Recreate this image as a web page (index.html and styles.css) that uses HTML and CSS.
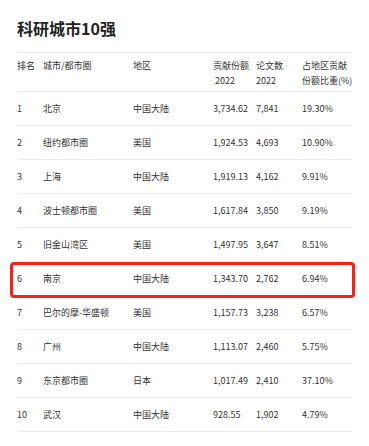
FILE: index.html
```html
<!DOCTYPE html>
<html lang="zh">
<head>
<meta charset="utf-8">
<link rel="stylesheet" href="styles.css">
</head>
<body>
<h1 class="title">科研城市10强</h1>
<div class="table-wrap">
<table class="rank">
<colgroup>
<col class="c1"><col class="c2"><col class="c3"><col class="c4"><col class="c5"><col class="c6">
</colgroup>
<thead>
<tr><th>排名</th><th>城市/都市圈</th><th>地区</th><th>贡献份额<br><span class="yr">2022</span></th><th>论文数<br>2022</th><th>占地区贡献<br>份额比重(%)</th></tr>
</thead>
<tbody>
<tr><td>1</td><td>北京</td><td>中国大陆</td><td>3,734.62</td><td>7,841</td><td>19.30%</td></tr>
<tr><td>2</td><td>纽约都市圈</td><td>美国</td><td>1,924.53</td><td>4,693</td><td>10.90%</td></tr>
<tr><td>3</td><td>上海</td><td>中国大陆</td><td>1,919.13</td><td>4,162</td><td>9.91%</td></tr>
<tr><td>4</td><td>波士顿都市圈</td><td>美国</td><td>1,617.84</td><td>3,850</td><td>9.19%</td></tr>
<tr><td>5</td><td>旧金山湾区</td><td>美国</td><td>1,497.95</td><td>3,647</td><td>8.51%</td></tr>
<tr><td>6</td><td>南京</td><td>中国大陆</td><td>1,343.70</td><td>2,762</td><td>6.94%</td></tr>
<tr><td>7</td><td>巴尔的摩-华盛顿</td><td>美国</td><td>1,157.73</td><td>3,238</td><td>6.57%</td></tr>
<tr><td>8</td><td>广州</td><td>中国大陆</td><td>1,113.07</td><td>2,460</td><td>5.75%</td></tr>
<tr><td>9</td><td>东京都市圈</td><td>日本</td><td>1,017.49</td><td>2,410</td><td>37.10%</td></tr>
<tr><td>10</td><td>武汉</td><td>中国大陆</td><td>928.55</td><td>1,902</td><td>4.79%</td></tr>
</tbody>
</table>
<div class="highlight"></div>
</div>
</body>
</html>
```
FILE: styles.css
```css
html, body {
  margin: 0;
  padding: 0;
  background: #fff;
}
body {
  padding: 0 17px;
  font-family: "Noto Sans CJK SC", "Noto Sans", sans-serif;
  color: #333;
}
.title {
  margin: 16px 0 12px;
  font-size: 16px;
  line-height: 24px;
  font-weight: 700;
  color: #222;
}
.table-wrap {
  position: relative;
  width: 335px;
}
.rank {
  width: 335px;
  table-layout: fixed;
  border-collapse: collapse;
  font-size: 9px;
  line-height: 15px;
}
.c1 { width: 26px; }
.c2 { width: 90px; }
.c3 { width: 80px; }
.c4 { width: 43px; }
.c5 { width: 46px; }
.c6 { width: 50px; }
.rank th {
  font-weight: 400;
  text-align: left;
  vertical-align: top;
  padding: 5px 0 3px;
  height: 30px;
  border-top: 1px solid #ececec;
  border-bottom: 1px solid #ececec;
  white-space: nowrap;
}
.yr {
  padding-left: 2px;
}
.rank td {
  padding: 0;
  height: 33px;
  border-bottom: 1px solid #ececec;
  white-space: nowrap;
  vertical-align: middle;
}
.highlight {
  position: absolute;
  left: -7px;
  top: 210px;
  box-sizing: border-box;
  width: 345px;
  height: 36px;
  border: 3px solid #f5221b;
  border-radius: 4px;
}
```
